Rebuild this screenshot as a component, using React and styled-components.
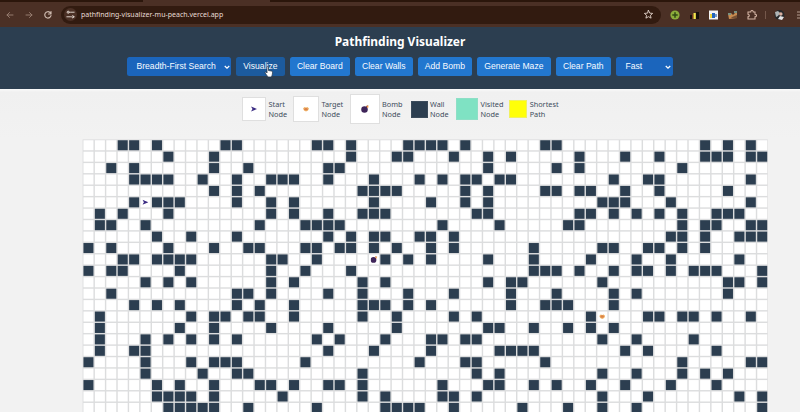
import React from "react";
import styled, { createGlobalStyle } from "styled-components";

const GlobalStyle = createGlobalStyle`
  * { box-sizing: border-box; }
  body { margin: 0; background: #f2f2f2; }
`;

const Page = styled.div`
  width: 800px;
  height: 412px;
  overflow: hidden;
  background: #f2f2f2;
  font-family: "Noto Sans", sans-serif;
  position: relative;
`;

const TabStrip = styled.div`
  height: 2px;
  background: #2b160b;
  display: flex;
  padding-left: 143px;
`;

const ActiveTab = styled.div`
  width: 127px;
  height: 2px;
  background: #4b3025;
`;

const BrowserBar = styled.div`
  height: 25px;
  background: #4b3025;
  display: flex;
  align-items: center;
  padding: 0 0 0 4px;
`;

const NavIcons = styled.div`
  display: flex;
  gap: 7px;
  width: 57px;
  flex: none;
`;

const AddressBar = styled.div`
  width: 600px;
  height: 18px;
  flex: none;
  border-radius: 9px;
  background: #321b10;
  display: flex;
  align-items: center;
  padding: 0 7px 0 3px;
`;

const SiteBadge = styled.div`
  width: 13px;
  height: 13px;
  border-radius: 50%;
  background: #4b3025;
  display: flex;
  align-items: center;
  justify-content: center;
`;

const Url = styled.div`
  margin-left: 4px;
  flex: 1;
  font-size: 7px;
  line-height: 12px;
  color: #e8dcd5;
`;

const Extensions = styled.div`
  display: flex;
  align-items: center;
  margin-left: 9px;
  flex: none;
`;

const Header = styled.header`
  height: 62px;
  background: #2c3e50;
  display: flex;
  flex-direction: column;
  align-items: center;
`;

const Title = styled.h1`
  margin: 6px 0 0;
  height: 24px;
  line-height: 18px;
  font-size: 11.95px;
  font-weight: 700;
  color: #fff;
  white-space: nowrap;
`;

const Controls = styled.div`
  display: flex;
  width: 546px;
  justify-content: space-between;
`;

const Button = styled.button`
  width: ${(p) => p.$w}px;
  height: 19px;
  border: 0;
  border-radius: 2.5px;
  padding: 0;
  background: ${(p) => (p.$active ? "#1c5b9e" : "#2277cf")};
  color: #f8fbff;
  font: 8.6px/19px "Liberation Sans", sans-serif;
  white-space: nowrap;
`;

const Dropdown = styled.div`
  width: ${(p) => p.$w}px;
  height: 19px;
  border-radius: 2.5px;
  background: #1b65bc;
  color: #f8fbff;
  display: flex;
  align-items: center;
  justify-content: space-between;
  padding: 0 1.5px 0 9.5px;
  font: 8.6px/19px "Liberation Sans", sans-serif;
  white-space: nowrap;
`;

const Legend = styled.section`
  height: 51px;
  display: flex;
  align-items: center;
  padding: 0 0 11px 242px;
  background: linear-gradient(#fafafa 0, #f0f0f0 3px, #f2f2f2 100%);
`;

const LegendItem = styled.div`
  display: flex;
  align-items: center;
  gap: 2.5px;
  width: ${(p) => p.$w}px;
  flex: none;
`;

const Swatch = styled.div`
  width: ${(p) => p.$size}px;
  height: ${(p) => p.$size}px;
  flex: none;
  background: ${(p) => p.$color || "#fff"};
  border: 1px solid ${(p) => p.$edge || "#dfdfdf"};
  display: flex;
  align-items: center;
  justify-content: center;
`;

const Label = styled.div`
  font-size: 7.3px;
  line-height: 10px;
  color: #3d4c5c;
  white-space: nowrap;
`;

/* Laid out on a 40px pitch, then scaled down to fit 60 columns. */
const Board = styled.main`
  width: 2400px;
  margin-left: 83px;
  padding: 2.5px;
  background: #dcddde;
  display: grid;
  grid-template-columns: repeat(60, 35px);
  grid-auto-rows: 35px;
  gap: 5px;
  transform: translate(-0.4px, -0.6px) scale(0.2855);
  transform-origin: 0 0;
`;

const Cell = styled.div`
  background: ${(p) => (p.$wall ? "#2c3e50" : "#fff")};
  display: flex;
  align-items: center;
  justify-content: center;
`;

const Marker = styled.div`
  line-height: 0;
  transform: scale(3.5);
`;

const Pointer = styled.div`
  position: absolute;
  left: 264px;
  top: 66px;
  line-height: 0;
`;

const Icon = ({ size = 12, children }) => (
  <svg width={size} height={size} viewBox="0 0 24 24" fill="none" stroke="#cdb9ae" strokeWidth="2" strokeLinecap="round" strokeLinejoin="round">
    {children}
  </svg>
);

const StartIcon = () => (
  <svg width="6" height="6" viewBox="0 0 12 12">
    <path d="M0 1 12 6 0 11 3 6Z" fill="#3b2c83" />
  </svg>
);

const TargetIcon = () => (
  <svg width="6" height="6" viewBox="0 0 12 12">
    <path d="M0 5 3 2 6 3 9 2 12 5 10 9 6 11 2 9Z" fill="#efb56c" />
    <ellipse cx="6" cy="6.3" rx="3.4" ry="2.4" fill="#dc8246" />
  </svg>
);

const BombIcon = ({ size = 8 }) => (
  <svg width={size} height={size} viewBox="0 0 16 16">
    <circle cx="7" cy="9" r="6.5" fill="#3e2459" />
    <path d="m10 4 3-3" stroke="#674070" strokeWidth="2" />
    <path d="m12 0 1 2 3-1-2 3 1 2-3-1-1-3Z" fill="#f39435" />
  </svg>
);

const Chevron = () => (
  <svg width="6" height="6" viewBox="0 0 12 12" fill="none" stroke="#fff" strokeWidth="2.4">
    <path d="m1.5 4 4.5 4.5L10.5 4" />
  </svg>
);

const Extension = styled.svg`
  width: ${(p) => p.$w || 9}px;
  height: 10px;
  margin-right: ${(p) => p.$gap}px;
  flex: none;
`;

const WALLS = [
  [3, 4, 6, 12, 13, 20, 21, 23, 28, 29, 30, 31, 33, 40, 41, 54, 56, 58],
  [7, 11, 23, 27, 28, 32, 35, 37, 43, 47, 50, 54, 55, 56, 58, 59],
  [2, 4, 11, 14, 21, 22, 35, 41, 43, 52],
  [4, 5, 6, 7, 10, 13, 16, 17, 18, 21, 25, 29, 31, 33, 34, 36, 37, 46, 49, 50, 58],
  [11, 13, 15, 24, 25, 26, 27, 33, 35, 40, 41, 43, 44, 47, 50, 56],
  [4, 6, 7, 8, 13, 16, 18, 25, 30, 33, 35, 45, 46, 47, 51, 58],
  [1, 3, 7, 16, 18, 21, 24, 25, 26, 34, 35, 43, 44, 46, 48, 50, 52, 55, 56, 57],
  [1, 2, 5, 15, 19, 20, 21, 22, 31, 36, 42, 43, 52, 54, 55, 58, 59],
  [6, 9, 13, 21, 23, 25, 26, 29, 30, 32, 51, 52, 54, 57, 58, 59],
  [0, 2, 7, 11, 14, 15, 19, 20, 22, 23, 25, 27, 30, 32, 39, 45, 46, 49, 50, 52, 54],
  [3, 4, 6, 7, 8, 9, 16, 17, 20, 26, 28, 30, 35, 39, 44, 48, 51, 57],
  [0, 2, 3, 8, 16, 19, 23, 39, 40, 41, 43, 46, 48, 49, 51, 53, 54, 55, 59],
  [5, 7, 9, 16, 18, 24, 26, 35, 37, 38, 45, 56, 57, 59],
  [2, 13, 14, 16, 21, 24, 28, 32, 37, 41, 46, 48, 56],
  [4, 6, 8, 13, 15, 18, 24, 25, 26, 28, 30, 37, 40, 41, 42, 46],
  [1, 9, 11, 12, 14, 15, 18, 24, 27, 32, 34, 44, 49, 50, 52, 53, 55, 58],
  [1, 8, 11, 16, 21, 27, 35, 36, 39, 42, 44, 46],
  [1, 5, 7, 9, 11, 13, 20, 22, 26, 30, 31, 33, 34, 45, 48, 53],
  [1, 4, 5, 21, 25, 30, 36, 37, 38, 39, 47, 49, 55],
  [0, 5, 9, 11, 12, 13, 19, 29, 33, 34, 40, 52, 58, 59],
  [5, 10, 13, 14, 24, 34, 36, 45, 48, 52, 54, 56],
  [0, 6, 8, 11, 15, 16, 18, 21, 22, 24, 31, 35, 36, 39, 41, 44, 47, 51, 55],
  [6, 7, 8, 9, 11, 17, 24, 26, 31, 32, 34, 45, 49, 57, 59],
  [7, 8, 9, 10, 11, 14, 20, 26, 27, 28, 29, 32, 38, 42, 45, 48, 59],
];

const MARKERS = {
  "5-5": <StartIcon />,
  "10-25": <BombIcon size={7} />,
  "15-45": <TargetIcon />,
};

const LEGEND = [
  { w: 51, size: 24, label: ["Start", "Node"], icon: <StartIcon /> },
  { w: 56.5, size: 26, label: ["Target", "Node"], icon: <TargetIcon /> },
  { w: 61, size: 30, label: ["Bomb", "Node"], icon: <BombIcon /> },
  { w: 45.5, size: 17, label: ["Wall", "Node"], color: "#2c3e50", edge: "#3b4b5b" },
  { w: 53.2, size: 22, label: ["Visited", "Node"], color: "#7fe2c3", edge: "#8edfc6" },
  { w: 60, size: 18, label: ["Shortest", "Path"], color: "#ffff08", edge: "#f0f060" },
];

export default function App() {
  return (
    <Page>
      <GlobalStyle />
      <TabStrip><ActiveTab /></TabStrip>
      <BrowserBar>
        <NavIcons>
          <Icon><g stroke="#957b6e"><path d="M18 12H6M11 7l-5 5 5 5" /></g></Icon>
          <Icon><g stroke="#957b6e"><path d="M6 12h12M13 7l5 5-5 5" /></g></Icon>
          <Icon><path d="M18 13a6.3 6.3 0 1 1-2-6l2 2M18 5v5h-5" strokeWidth="2.4" /></Icon>
        </NavIcons>
        <AddressBar>
          <SiteBadge>
            <Icon size={11}>
              <g stroke="#eadfd9"><circle cx="7" cy="7" r="2.3" /><path d="M12 7h8M4 17h8" /><circle cx="17" cy="17" r="2.3" /></g>
            </Icon>
          </SiteBadge>
          <Url>pathfinding-visualizer-mu-peach.vercel.app</Url>
          <Icon size={11}>
            <path d="m12 3 2.7 6 6.3.6-4.8 4.2 1.4 6.2-5.6-3.3L6.4 20l1.4-6.2L3 9.6l6.3-.6Z" stroke="#e3d3ca" />
          </Icon>
        </AddressBar>
        <Extensions>
          <Extension $w={10} $gap={10} viewBox="0 0 10 10">
            <circle cx="5" cy="5" r="4.6" fill="#8bac3b" />
            <path d="M5 2.3v5.4M2.3 5h5.4" stroke="#304815" strokeWidth="1.5" />
          </Extension>
          <Extension $gap={10} viewBox="0 0 9 10">
            <path d="M0 5h2v4H0zM6 2h3v7H6z" fill="#17100d" />
            <path d="M2 4h1v5H2z" fill="#7a3a20" />
            <path d="M3.5 3h2.3v6H3.5z" fill="#f4e64b" />
          </Extension>
          <Extension $gap={10} viewBox="0 0 9 10">
            <path d="M0 .5h9v9H0z" fill="#f4f4f5" />
            <path d="M1 4h2v4H1z" fill="#f2d93d" />
            <path d="M3 3h3v5H3z" fill="#2465bd" />
            <path d="M6 4h2v3H6z" fill="#7b9bc5" />
          </Extension>
          <Extension $w={10} $gap={9} viewBox="0 0 10 10">
            <path d="M0 4 3 3l2 2 4-4v7L1 9Z" fill="#c68a50" />
            <path d="M0 3h3v2H0zM6 1h3v2H6z" fill="#789082" />
            <path d="m4 7 5-2v3H3Z" fill="#765033" />
          </Extension>
          <Extension $w={10} $gap={8} viewBox="0 0 10 10">
            <path d="M1 2h2.7c0-2 2.6-2 2.6 0H8v2.3c2 0 2 2.4 0 2.4V9H1V6.7c1.7 0 1.7-2.4 0-2.4Z" fill="none" stroke="#d3b3a3" strokeWidth="1.1" />
          </Extension>
          <Extension $w={1} $gap={8} viewBox="0 0 1 10"><path d="M0 1h1v8H0z" fill="#75584b" /></Extension>
          <Extension $w={11} $gap={12} viewBox="0 0 11 10">
            <circle cx="5.5" cy="5" r="5" fill="#25282b" />
            <path d="m1 2 3-1 2 2-2 3-2 1Z" fill="#aeb4b5" />
            <circle cx="6.8" cy="4" r="1.8" fill="#d8afa0" />
            <path d="m4 9 2-3 4 1-2 3Z" fill="#e4e5e7" />
          </Extension>
          <Extension $w={4} $gap={0} viewBox="0 0 4 10"><path d="M0 2h4M0 5h4M0 8h4" stroke="#b59c90" /></Extension>
        </Extensions>
      </BrowserBar>
      <Header>
        <Title>Pathfinding Visualizer</Title>
        <Controls>
          <Dropdown $w={104}>Breadth-First Search<Chevron /></Dropdown>
          <Button $w={49} $active>Visualize</Button>
          <Button $w={60}>Clear Board</Button>
          <Button $w={58}>Clear Walls</Button>
          <Button $w={54.5}>Add Bomb</Button>
          <Button $w={73.5}>Generate Maze</Button>
          <Button $w={55.5}>Clear Path</Button>
          <Dropdown $w={57}>Fast<Chevron /></Dropdown>
        </Controls>
      </Header>
      <Legend>
        {LEGEND.map((item) => (
          <LegendItem key={item.label[0]} $w={item.w}>
            <Swatch $size={item.size} $color={item.color} $edge={item.edge}>{item.icon}</Swatch>
            <Label>{item.label[0]}<br />{item.label[1]}</Label>
          </LegendItem>
        ))}
      </Legend>
      <Board>
        {WALLS.flatMap((walls, row) =>
          Array.from({ length: 60 }, (_, col) => {
            const marker = MARKERS[`${row}-${col}`];
            return (
              <Cell key={`${row}-${col}`} $wall={walls.includes(col)}>
                {marker && <Marker>{marker}</Marker>}
              </Cell>
            );
          })
        )}
      </Board>
      <Pointer>
        <svg width="9" height="12" viewBox="0 0 18 24">
          <path d="M6 2c0-2 3-2 3 0v7l6 1c2 0 2 2 2 4-.5 4-1 6-3 8H8c-2-3-4-5-6-9 1-2 3-1 4 1Z" fill="#fff" stroke="#25374a" strokeWidth="1.5" />
        </svg>
      </Pointer>
    </Page>
  );
}
